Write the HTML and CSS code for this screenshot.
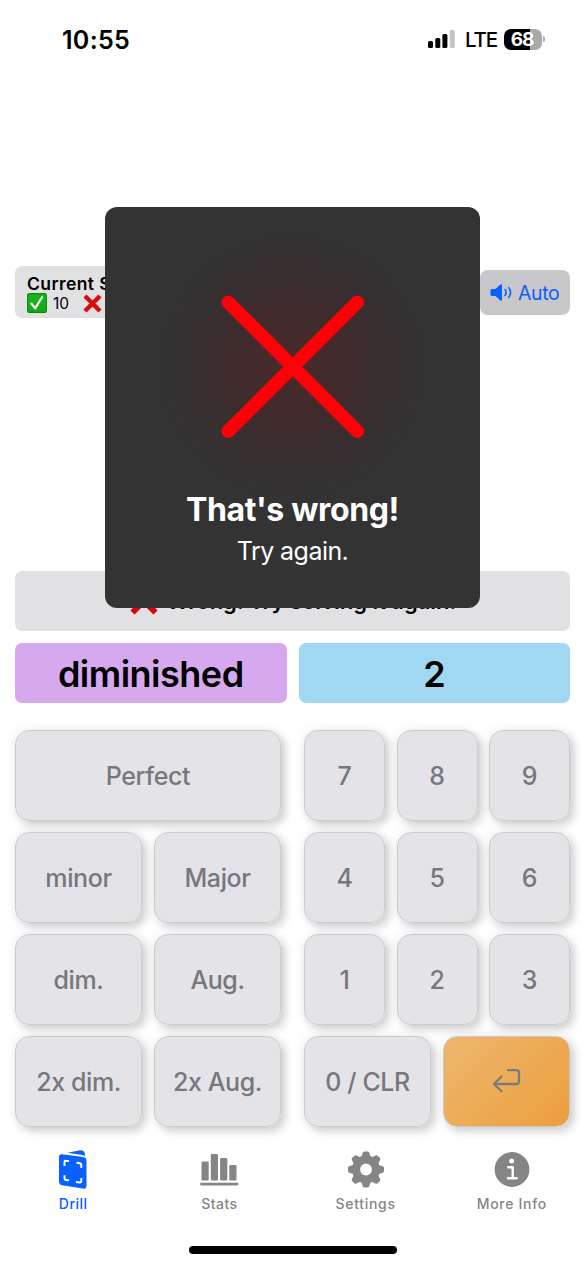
FILE: index.html
```html
<!DOCTYPE html>
<html lang="en">
<head>
<meta charset="utf-8">
<meta name="viewport" content="width=device-width">
<title>Interval Drill</title>
<link rel="stylesheet" href="styles.css">
</head>
<body>
<main class="screen">
  <header class="status">
    <time class="clock">10:55</time>
    <div class="status-right">
      <svg class="signal" width="29" height="19" viewBox="0 0 29 19"><rect x="0" y="11" width="5" height="7" rx="1.5"/><rect x="7.3" y="8" width="5" height="10" rx="1.5"/><rect x="14.4" y="4" width="5" height="14" rx="1.5"/><rect x="21.8" y="0" width="5" height="18" rx="1.5" fill="#c3c3c3"/></svg>
      <span class="lte">LTE</span>
      <span class="battery"><b>68</b></span><i class="battery-tip"></i>
    </div>
  </header>

  <section class="toolbar">
    <div class="session">
      <strong>Current Session</strong>
      <div class="scores">
        <svg width="20" height="20" viewBox="0 0 20 20"><defs><linearGradient id="green" x2="0" y2="1"><stop stop-color="#18b51e"/><stop offset="1" stop-color="#16a716"/></linearGradient></defs><rect x=".6" y=".6" width="18.8" height="18.8" rx="2" fill="url(#green)" stroke="#078d0b" stroke-width="1.1"/><path d="M4.3 10.5 8.2 15.4 15 4.2" fill="none" stroke="#fff" stroke-width="2.1" stroke-linecap="round" stroke-linejoin="round"/></svg>
        <span>10</span>
        <svg class="miss" width="19" height="19" viewBox="0 0 19 19"><path d="M2 2 17 17M17 2 2 17" stroke="#dc0a0a" stroke-width="4.4"/></svg>
        <span>2</span>
      </div>
    </div>
    <button class="auto">
      <svg width="23" height="20" viewBox="0 0 23 20"><path d="M1.8 6H5.5L10 1.8Q12 .5 12 2.5V16.5Q12 18.5 10 17.2L5.5 13H1.8Q.5 13 .5 11.8V7.2Q.5 6 1.8 6Z" fill="#0a60ff"/><path d="M15 6.6Q17.2 9.5 15 12.4M18.8 4.6Q22.4 9.5 18.8 14.4" fill="none" stroke="#0a60ff" stroke-width="1.6" stroke-linecap="round"/></svg>
      <span>Auto</span>
    </button>
  </section>

  <section class="message">
    <svg width="28" height="28" viewBox="0 0 28 28"><path d="M2.5 2.5 25.5 25.5M25.5 2.5 2.5 25.5" stroke="#d60606" stroke-width="6"/></svg>
    <span>Wrong! Try solving it again!</span>
  </section>

  <section class="answers">
    <div class="answer quality">diminished</div>
    <div class="answer number">2</div>
  </section>

  <section class="keypad">
    <div class="keys qualities">
      <button class="key wide">Perfect</button>
      <button class="key">minor</button><button class="key">Major</button>
      <button class="key">dim.</button><button class="key">Aug.</button>
      <button class="key">2x dim.</button><button class="key">2x Aug.</button>
    </div>
    <div class="keys numbers">
      <button class="key">7</button><button class="key">8</button><button class="key">9</button>
      <button class="key">4</button><button class="key">5</button><button class="key">6</button>
      <button class="key">1</button><button class="key">2</button><button class="key">3</button>
      <button class="key half">0 / CLR</button>
      <button class="key half enter" aria-label="Enter"><svg width="29" height="26" viewBox="0 0 29 26"><path d="M16 1.2H24.3Q27 1.2 27 4V12.2Q27 15 24.3 15H2M9.5 7.5 2 15 9.5 22.3" fill="none" stroke="#7b7b7f" stroke-width="2.3" stroke-linecap="round" stroke-linejoin="round"/></svg></button>
    </div>
  </section>

  <nav class="tabs">
    <a class="tab active">
      <svg width="40" height="40" viewBox="0 0 40 40"><path d="M14.5 2.8 27 .3Q31.3-.1 31.9 4.1V6.3Q31 5.3 29 5Z" fill="#0a60ff"/><path d="M9 4.2 30.3 7Q33.5 7.6 33.5 10.5V35.5Q33.4 39.3 30 38.5L9 35.2Q6 34.5 6 31.5V7Q6 4 9 4.2Z" fill="#0a60ff"/><path d="M11.5 16V11.8Q11.5 10.5 13 10.8L16 11.1M23.5 12.7 27 13.2Q28.3 13.5 28.3 15V18M11.5 25.3V28.5Q11.5 29.8 13 30L16 30.4M23 32 27 32.5Q28.3 32.5 28.3 31V28" fill="none" stroke="#fff" stroke-width="1.9"/></svg>
      <span>Drill</span>
    </a>
    <a class="tab">
      <svg width="40" height="40" viewBox="0 0 40 40" fill="#858585"><rect x="2.5" y="11.5" width="7.2" height="19" rx="1.3"/><rect x="11.8" y="4" width="7.2" height="26.5" rx="1.3"/><rect x="21.1" y="8" width="7.2" height="22.5" rx="1.3"/><rect x="30.3" y="15" width="7.2" height="15.5" rx="1.3"/><rect x="1" y="32.7" width="38.5" height="2.8" rx="1.4"/></svg>
      <span>Stats</span>
    </a>
    <a class="tab wide-label">
      <svg width="40" height="40" viewBox="0 0 40 40" fill="none" stroke="#858585"><circle cx="20" cy="19.5" r="9.9" stroke-width="8"/><g fill="#858585" stroke="none"><path id="tooth" d="M15 8 16.8 2.8Q17.1 1.5 18.5 1.5H21.5Q22.9 1.5 23.2 2.8L25 8Z"/><use href="#tooth" transform="rotate(45 20 19.5)"/><use href="#tooth" transform="rotate(90 20 19.5)"/><use href="#tooth" transform="rotate(135 20 19.5)"/><use href="#tooth" transform="rotate(180 20 19.5)"/><use href="#tooth" transform="rotate(225 20 19.5)"/><use href="#tooth" transform="rotate(270 20 19.5)"/><use href="#tooth" transform="rotate(315 20 19.5)"/></g></svg>
      <span>Settings</span>
    </a>
    <a class="tab wide-label">
      <svg width="40" height="40" viewBox="0 0 40 40"><circle cx="20" cy="19.5" r="17.4" fill="#858585"/><circle cx="19.6" cy="11" r="2.5" fill="#fff"/><path d="M16.3 17.2H20.7V28.2M16 28.2H24.7" fill="none" stroke="#fff" stroke-width="2.4" stroke-linecap="round" stroke-linejoin="round"/></svg>
      <span>More Info</span>
    </a>
  </nav>
  <div class="home"></div>

  <section class="modal" role="alertdialog">
    <svg class="cross" width="144" height="144" viewBox="0 0 144 144"><path d="M7.2 7.2 136.3 136.3M136.3 7.2 7.2 136.3" stroke="#ff0008" stroke-width="13.5" stroke-linecap="round"/></svg>
    <h1>That's wrong!</h1>
    <p>Try again.</p>
  </section>
</main>
</body>
</html>
```
FILE: styles.css
```css
* { box-sizing: border-box; }
body { margin: 0; background: #fff; color: #000; font-family: Inter, "Liberation Sans", sans-serif; }
button { border: 0; margin: 0; padding: 0; font-family: inherit; }
svg { display: block; flex: none; overflow: visible; }
.screen { position: relative; width: 585px; height: 1266px; overflow: hidden; display: flex; flex-direction: column; }

.status { height: 80px; padding: 0 40px 2px 62px; display: flex; justify-content: space-between; align-items: center; }
.clock { padding-top: 2px; font-size: 25px; font-weight: 600; letter-spacing: .3px; }
.status-right { display: flex; align-items: center; }
.signal { margin-right: 8px; }
.lte { font-size: 20.5px; font-weight: 500; letter-spacing: -1.2px; width: 39px; margin-top: 1px; }
.battery { width: 38px; height: 21px; border-radius: 7px; background: linear-gradient(90deg, #000 69%, #a9a9a9 69%); color: #fff; display: grid; place-items: center; font-size: 19px; line-height: 21px; letter-spacing: -1.2px; }
.battery b { padding-right: 2px; }
.battery-tip { width: 2px; height: 6px; margin-left: 1px; border-radius: 0 3px 3px 0; background: #b0b0b0; }

.toolbar { margin-top: 186px; height: 52px; padding: 0 15px; display: flex; justify-content: space-between; align-items: center; }
.session { width: 210px; height: 52px; padding: 8px 12px 6px; border-radius: 7px; background: #e1e1e3; font-size: 15px; }
.session strong { display: block; font-size: 17.5px; line-height: 20px; font-weight: 600; letter-spacing: .4px; white-space: nowrap; }
.scores { display: flex; align-items: center; height: 20px; margin-top: -1px; }
.scores span { margin-left: 6px; width: 30px; font-size: 15.5px; }
.miss { margin-right: 6px; }
.auto { width: 90px; height: 45px; margin-top: 1px; display: flex; align-items: center; gap: 5px; padding-left: 10px; border-radius: 8px; background: #c8c8cb; color: #0a60ff; font-size: 19.5px; letter-spacing: -.4px; }

.message { margin: 253px 15px 0; height: 60px; display: flex; justify-content: center; align-items: center; gap: 9px; border-radius: 7px; background: #e1e1e3; font-size: 22px; font-weight: 600; letter-spacing: -.05px; }
.message span { width: 289px; white-space: nowrap; }
.answers { margin: 12px 15px 0; display: grid; grid-template-columns: 1fr 1fr; gap: 12px; }
.answer { height: 60px; padding-top: 1px; border-radius: 7px; display: grid; place-items: center; font-size: 36px; font-weight: 600; letter-spacing: -.5px; }
.quality { background: #d6a9ef; }
.number { background: #a0d7f3; }

.keypad { margin: 27px 15px 0; display: flex; justify-content: space-between; }
.keys { width: 266px; display: grid; grid-auto-rows: 90.5px; row-gap: 11.5px; column-gap: 12px; }
.qualities { grid-template-columns: 1fr 1fr; }
.numbers { grid-template-columns: repeat(6, 1fr); column-gap: 11.5px; }
.numbers .key { grid-column: span 2; }
.numbers .half { grid-column: span 3; }
.keys .wide { grid-column: 1 / -1; }
.key { padding-top: 2px; border: 1px solid #cbcbce; border-radius: 14px; background: linear-gradient(120deg, #e4e3e8, #e4e4e7); box-shadow: 4px 4px 10px rgba(0,0,0,.2), -3px -3px 12px rgba(0,0,0,.035); color: #77777c; font-size: 25px; font-weight: 500; letter-spacing: -.4px; display: grid; place-items: center; }
.enter { background: linear-gradient(135deg, #edb76f, #ec9f3c); }

.tabs { margin-top: 22px; display: grid; grid-template-columns: repeat(4, 1fr); height: 72px; }
.tab { padding-top: 1px; display: flex; flex-direction: column; align-items: center; gap: 4px; color: #858585; font-size: 14px; line-height: 20px; font-weight: 500; letter-spacing: .45px; }
.wide-label { letter-spacing: .7px; }
.active { color: #0a60ff; }
.home { width: 208px; height: 8px; margin: 25px auto 0; border-radius: 4px; background: #000; }

.modal { position: absolute; left: 105px; top: 207px; width: 375px; height: 401px; padding-top: 88px; display: flex; flex-direction: column; align-items: center; border-radius: 12px; background: radial-gradient(circle at 187px 159px, #4a2929 0, #402b2c 60px, #372f30 95px, #333 135px); color: #fff; }
.modal h1 { margin: 51px 0 0; font-size: 32px; line-height: 40px; font-weight: 700; letter-spacing: -.35px; }
.modal p { margin: 6px 0 0; font-size: 25px; line-height: 30px; letter-spacing: -.55px; }
```
